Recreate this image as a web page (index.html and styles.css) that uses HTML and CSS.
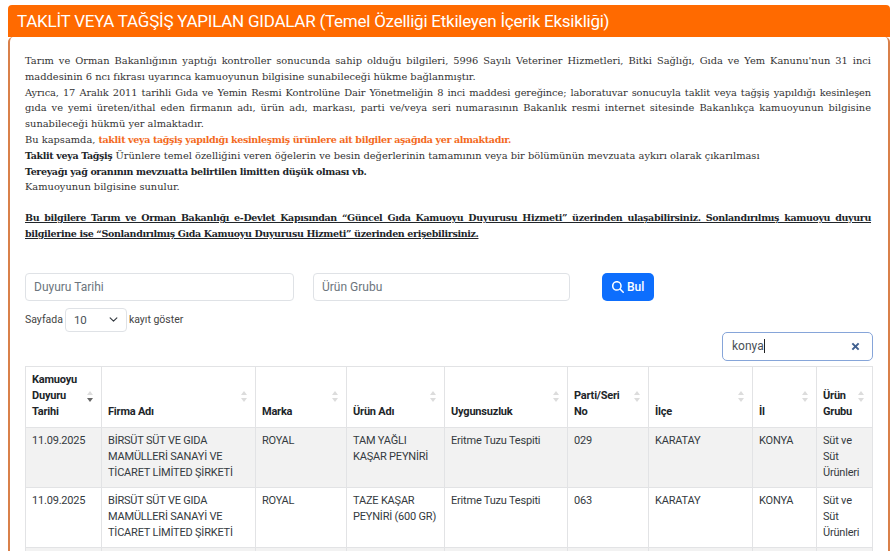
FILE: index.html
```html
<!DOCTYPE html>
<html lang="tr">
<head>
<meta charset="utf-8">
<title>Taklit veya Tağşiş</title>
<link rel="stylesheet" href="styles.css">
</head>
<body>
<div class="page">
  <h1 class="heading">TAKLİT VEYA TAĞŞİŞ YAPILAN GIDALAR (Temel Özelliği Etkileyen İçerik Eksikliği)</h1>
  <div class="panel">
    <div class="intro">
      <div class="j">Tarım ve Orman Bakanlığının yaptığı kontroller sonucunda sahip olduğu bilgileri, 5996 Sayılı Veteriner Hizmetleri, Bitki Sağlığı, Gıda ve Yem Kanunu'nun 31 inci</div>
      <div>maddesinin 6 ncı fıkrası uyarınca kamuoyunun bilgisine sunabileceği hükme bağlanmıştır.</div>
      <div class="j tight">Ayrıca, 17 Aralık 2011 tarihli Gıda ve Yemin Resmi Kontrolüne Dair Yönetmeliğin 8 inci maddesi gereğince; laboratuvar sonucuyla taklit veya tağşiş yapıldığı kesinleşen</div>
      <div class="j">gıda ve yemi üreten/ithal eden firmanın adı, ürün adı, markası, parti ve/veya seri numarasının Bakanlık resmi internet sitesinde Bakanlıkça kamuoyunun bilgisine</div>
      <div>sunabileceği hükmü yer almaktadır.</div>
      <div>Bu kapsamda, <b class="hot">taklit veya tağşiş yapıldığı kesinleşmiş ürünlere ait bilgiler aşağıda yer almaktadır.</b></div>
      <div><b>Taklit veya Tağşiş</b> Ürünlere temel özelliğini veren öğelerin ve besin değerlerinin tamamının veya bir bölümünün mevzuata aykırı olarak çıkarılması</div>
      <div><b>Tereyağı yağ oranının mevzuatta belirtilen limitten düşük olması vb.</b></div>
      <div>Kamuoyunun bilgisine sunulur.</div>
      <div class="notice">
        <div class="j">Bu bilgilere Tarım ve Orman Bakanlığı e-Devlet Kapısından “Güncel Gıda Kamuoyu Duyurusu Hizmeti” üzerinden ulaşabilirsiniz. Sonlandırılmış kamuoyu duyuru</div>
        <div>bilgilerine ise “Sonlandırılmış Gıda Kamuoyu Duyurusu Hizmeti” üzerinden erişebilirsiniz.</div>
      </div>
    </div>

    <div class="filters">
      <input class="field date" type="text" placeholder="Duyuru Tarihi">
      <input class="field group" type="text" placeholder="Ürün Grubu">
      <button class="find" type="button">
        <svg class="find-icon" viewBox="0 0 512 512" aria-hidden="true"><path d="M416 208c0 45.900-14.900 88.300-40 122.700L502.600 457.400c12.500 12.500 12.500 32.800 0 45.300s-32.800 12.500-45.300 0L330.700 376c-34.400 25.200-76.800 40-122.700 40C93.100 416 0 322.900 0 208S93.100 0 208 0S416 93.100 416 208zM208 352a144 144 0 1 0 0-288 144 144 0 1 0 0 288z"/></svg>
        Bul
      </button>
    </div>

    <div class="length">
      <span>Sayfada</span>
      <span class="select">10
        <svg class="chev" viewBox="0 0 16 16" aria-hidden="true"><path d="M2 5l6 6 6-6" fill="none" stroke="#343a40" stroke-width="2" stroke-linecap="round" stroke-linejoin="round"/></svg>
      </span>
      <span>kayıt göster</span>
    </div>

    <div class="search-row">
      <div class="search">
        <span class="search-text">konya</span><span class="caret"></span>
        <svg class="clear" viewBox="0 0 10 10" aria-hidden="true"><path d="M1.500 1.500l7 7M8.500 1.500l-7 7" stroke="#3f5f8f" stroke-width="2.200" fill="none"/></svg>
      </div>
    </div>

    <table class="data">
      <colgroup>
        <col class="c1"><col class="c2"><col class="c3"><col class="c4"><col class="c5"><col class="c6"><col class="c7"><col class="c8"><col class="c9">
      </colgroup>
      <thead>
        <tr>
          <th class="active">Kamuoyu Duyuru Tarihi</th>
          <th>Firma Adı</th>
          <th>Marka</th>
          <th>Ürün Adı</th>
          <th>Uygunsuzluk</th>
          <th>Parti/Seri No</th>
          <th>İlçe</th>
          <th>İl</th>
          <th>Ürün Grubu</th>
        </tr>
      </thead>
      <tbody>
        <tr class="odd">
          <td>11.09.2025</td><td>BİRSÜT SÜT VE GIDA MAMÜLLERİ SANAYİ VE TİCARET LİMİTED ŞİRKETİ</td><td>ROYAL</td><td>TAM YAĞLI KAŞAR PEYNİRİ</td><td>Eritme Tuzu Tespiti</td><td>029</td><td>KARATAY</td><td>KONYA</td><td>Süt ve Süt Ürünleri</td>
        </tr>
        <tr>
          <td>11.09.2025</td><td>BİRSÜT SÜT VE GIDA MAMÜLLERİ SANAYİ VE TİCARET LİMİTED ŞİRKETİ</td><td>ROYAL</td><td>TAZE KAŞAR PEYNİRİ (600 GR)</td><td>Eritme Tuzu Tespiti</td><td>063</td><td>KARATAY</td><td>KONYA</td><td>Süt ve Süt Ürünleri</td>
        </tr>
        <tr class="odd">
          <td></td><td></td><td></td><td></td><td></td><td></td><td></td><td></td><td></td>
        </tr>
      </tbody>
    </table>
  </div>
</div>
</body>
</html>
```

FILE: styles.css
```css
* { box-sizing: border-box; }
html, body { margin: 0; height: 100%; overflow: hidden; background: #fff; }
body { font-family: Roboto, "Liberation Sans", sans-serif; color: #212529; }
.page { padding: 5px 5px 0 8px; }
.heading {
  margin: 0; height: 32px; padding: 0 9px;
  background: #ff6a00; color: #fff;
  font-size: 17px; font-weight: 400; line-height: 32px; letter-spacing: -0.240px;
  border-radius: 4px 4px 0 0; white-space: nowrap;
}
.panel {
  border: solid #d9804a; border-width: 0 2px; border-radius: 5px 5px 0 0;
  padding: 16px 17px 0 15px; height: 514px; overflow: hidden;
}
.intro {
  font-family: "DejaVu Serif", serif; font-size: 9.850px; line-height: 15.800px; color: #333;
  white-space: nowrap;
}
.intro b { color: #212529; font-size: 9.500px; letter-spacing: -0.350px; }
.intro b.hot { color: #f36a1d; }
.j { text-align: justify; text-align-last: justify; white-space: normal; }
.tight { letter-spacing: -0.120px; }
.notice { margin-top: 15px; font-weight: 700; font-size: 9.500px; letter-spacing: -0.350px; text-decoration: underline; color: #212529; }
.filters { display: flex; align-items: flex-start; margin-top: 31px; }
.field {
  height: 28px; padding: 0 8px; border: 1px solid #dfe2e6; border-radius: 4px;
  font: 12px Roboto, sans-serif; color: #495057; background: #fff; outline: none;
}
.field::placeholder { color: #6c757d; opacity: 1; }
.date { width: 269px; margin-right: 19px; }
.group { width: 257px; margin-right: 32px; }
.find {
  display: flex; align-items: center; gap: 3px;
  height: 28px; width: 52px; padding: 0 0 0 10px; border: 0; border-radius: 5px;
  background: #0d6efd; color: #fff; font: 500 12px Roboto, sans-serif;
}
.find-icon { width: 12px; height: 12px; fill: #fff; }
.length { display: flex; align-items: center; height: 24px; margin-top: 7px; font-size: 10.500px; color: #444; }
.select {
  display: flex; align-items: center; justify-content: space-between;
  width: 62px; height: 24px; margin: 0 2px 0 2px; padding: 0 8px;
  border: 1px solid #dfe2e6; border-radius: 4px; font-size: 11.500px; color: #495057;
}
.chev { width: 9px; height: 9px; }
.search-row { display: flex; justify-content: flex-end; margin-top: 0; }
.search {
  display: flex; align-items: center; width: 151px; height: 29px; padding: 0 12px 0 9px; margin-right: -2px;
  border: 1px solid #86a5d9; border-radius: 5px; font-size: 12px; color: #495057;
}
.caret { width: 1px; height: 14px; background: #222; }
.clear { width: 9px; height: 9px; margin-left: auto; }
.data {
  table-layout: fixed; border-collapse: collapse; width: 847px; margin-top: 5px;
  font-size: 11px; line-height: 16px; letter-spacing: -0.200px; color: #343a40;
}
.c1 { width: 76px; } .c2 { width: 154px; } .c3 { width: 91px; } .c4 { width: 98px; }
.c5 { width: 123px; } .c6 { width: 81px; } .c7 { width: 104px; } .c8 { width: 64px; } .c9 { width: 56px; }
.data th, .data td { border: 1px solid #e2e3e5; padding: 5px 6px; vertical-align: top; text-align: left; }
.data th {
  position: relative; height: 61px; vertical-align: bottom; padding: 5px 18px 7px 6px;
  font-weight: 700; color: #212529;
}
.data th:last-child { padding-right: 14px; }
.data td { height: 60px; padding-top: 5px; padding-bottom: 6px; }
.odd td { background: #f2f2f2; }
.data th::before, .data th::after {
  content: ""; position: absolute; right: 8px; width: 0; height: 0;
  border-left: 3px solid transparent; border-right: 3px solid transparent;
}
.data th::before { top: 24px; border-bottom: 4px solid #dcdcdc; }
.data th::after { top: 31px; border-top: 4px solid #dcdcdc; }
.data th.active::after { border-top-color: #666; }
```
